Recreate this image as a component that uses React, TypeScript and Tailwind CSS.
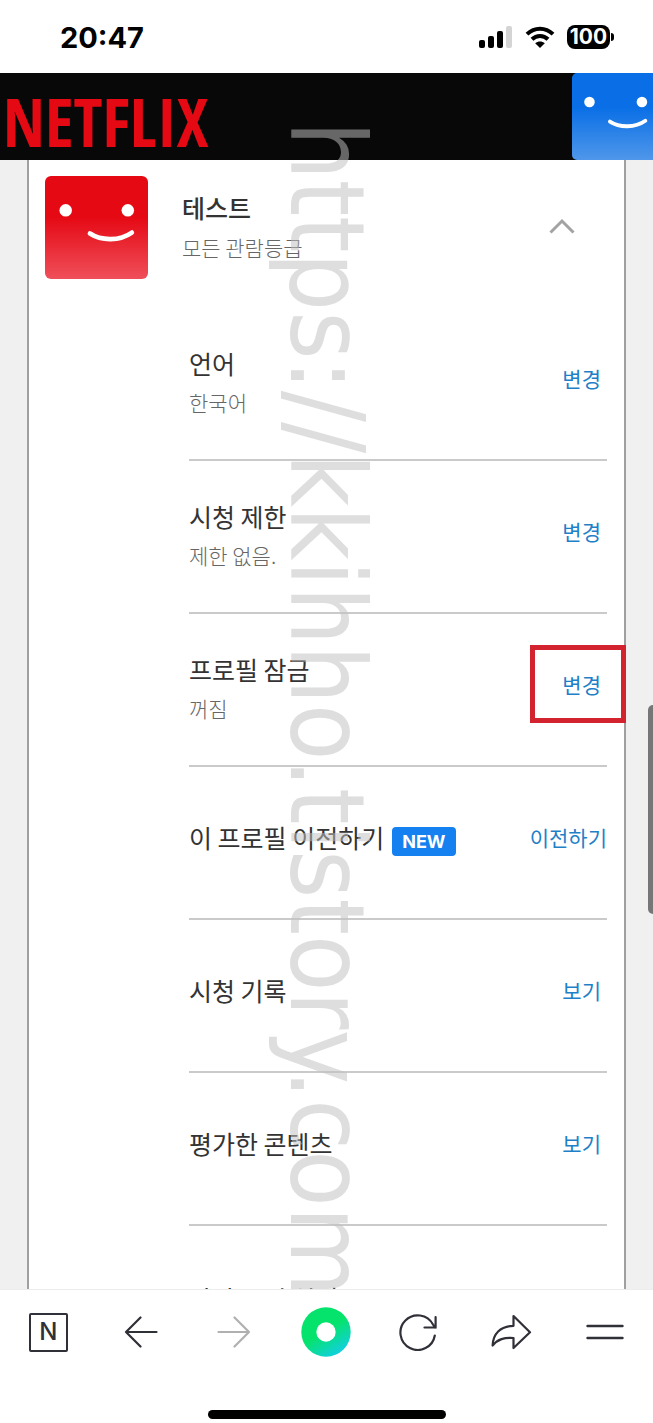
import React from 'react';

interface SettingRow {
  title: string;
  detail?: string;
  action?: string;
  isNew?: boolean;
  marked?: boolean;
}

const ROWS: SettingRow[] = [
  { title: '언어', detail: '한국어', action: '변경' },
  { title: '시청 제한', detail: '제한 없음.', action: '변경' },
  { title: '프로필 잠금', detail: '꺼짐', action: '변경', marked: true },
  { title: '이 프로필 이전하기', action: '이전하기', isNew: true },
  { title: '시청 기록', action: '보기' },
  { title: '평가한 콘텐츠', action: '보기' },
  { title: '자막 표시 설정' },
];

const Avatar: React.FC<{ id: string; top: string; bottom: string; className: string }> = ({ id, top, bottom, className }) => (
  <svg viewBox="0 0 102 102" className={className} aria-hidden="true">
    <defs>
      <linearGradient id={id} x1="0" y1="0" x2="0" y2="1">
        <stop offset="0.4" stopColor={top} />
        <stop offset="1" stopColor={bottom} />
      </linearGradient>
    </defs>
    <rect width="102" height="102" rx="6" fill={`url(#${id})`} />
    <circle cx="20.500" cy="34" r="6.200" fill="#fff" />
    <circle cx="82" cy="34" r="6.200" fill="#fff" />
    <path d="M44.500 57 C56 64.500 74 64.500 86 56" fill="none" stroke="#fff" strokeWidth="4.600" strokeLinecap="round" />
  </svg>
);

const StatusBar = () => (
  <div className="flex h-[73px] shrink-0 items-center justify-between bg-white pr-[39px] pl-[60px]">
    <span className="pt-0.5 font-['Inter'] text-[29px] leading-8 font-bold text-black">20:47</span>
    <div className="flex items-center gap-3">
      {/* Signal */}
      <svg width="34" height="22" viewBox="0 0 34 22" aria-hidden="true">
        <rect x="0" y="14" width="6" height="8" rx="2" />
        <rect x="9" y="10" width="6" height="12" rx="2" />
        <rect x="18" y="5" width="6" height="17" rx="2" />
        <rect x="27" y="0" width="6" height="22" rx="2" fill="#d4d4d4" />
      </svg>
      {/* Wi-Fi */}
      <svg width="30" height="22" viewBox="0 0 30 22" aria-hidden="true" fill="none" stroke="#000" strokeWidth="4">
        <path d="M2 8.200 C9.500 0.800 20.500 0.800 28 8.200" />
        <path d="M7 13.300 C11.500 8.900 18.500 8.900 23 13.300" />
        <path d="M15 22 L10.200 17.200 C13 14.800 17 14.800 19.800 17.200 Z" fill="#000" stroke="none" />
      </svg>
      {/* Battery */}
      <div className="flex items-center gap-px">
        <span className="flex h-6 w-[43px] items-center justify-center rounded-lg bg-black font-['Inter'] text-[21px] leading-6 font-bold text-white">
          100
        </span>
        <span className="h-2 w-[3px] rounded-r-full bg-black" />
      </div>
    </div>
  </div>
);

const SiteHeader = () => (
  <header className="relative flex h-[87px] shrink-0 items-center justify-between bg-[#080808] pl-[3px]">
    <a
      href="#home"
      className="pt-2.5 font-['Noto_Sans_ExtraCondensed','Open_Sans_Condensed','Liberation_Sans_Narrow',sans-serif] text-[67px] leading-none font-bold text-[#e50914]"
    >
      NETFLIX
    </a>
    <button type="button" aria-label="profile" className="h-[87px] w-[81px] overflow-hidden">
      <Avatar id="blueFace" top="#0a6fe6" bottom="#4f97ea" className="size-[87px]" />
    </button>
  </header>
);

const ProfileSummary = () => (
  <div className="flex items-center pr-[49px] pl-4">
    <Avatar id="redFace" top="#e50914" bottom="#ef4f5a" className="size-[103px] shrink-0" />
    <div className="ml-[34px] flex-1 pb-0.5">
      <h2 className="text-[25px] leading-10 font-medium text-[#333]">테스트</h2>
      <p className="text-[21px] leading-10 font-light text-[#666]">모든 관람등급</p>
    </div>
    <button type="button" aria-label="collapse" className="pb-1">
      <svg width="26" height="16" viewBox="0 0 26 16" fill="none" stroke="#a3a3a3" strokeWidth="3">
        <path d="M1.500 14.500 L13 3 L24.500 14.500" />
      </svg>
    </button>
  </div>
);

const Row: React.FC<{ row: SettingRow }> = ({ row }) => (
  <li className="flex h-[153px] shrink-0 items-center justify-between border-b-2 border-[#cacaca] pb-3 last:pb-2">
    <div className={row.detail ? 'pt-2' : ''}>
      <div className="flex items-center gap-2">
        <h3 className="text-[25px] leading-10 font-normal text-[#333]">{row.title}</h3>
        {row.isNew && (
          <span className="mt-2.5 rounded-sm bg-[#1580f0] px-2.5 font-['Inter'] text-[18px] leading-[29px] font-bold text-white">
            NEW
          </span>
        )}
      </div>
      {row.detail && <p className="text-[21px] leading-[38px] font-light text-[#666]">{row.detail}</p>}
    </div>
    {row.marked ? (
      <div className="-mr-[19px] border-[5px] border-[#d2232f] py-[14px] pr-5 pl-[27px]">
        <a href="#change" className="block text-[21px] leading-10 text-[#1f80c8]">{row.action}</a>
      </div>
    ) : (
      row.action && (
        <a href="#change" className={`text-[21px] leading-10 text-[#1f80c8] ${row.isNew ? '' : 'pr-1.5'}`}>{row.action}</a>
      )
    )}
  </li>
);

const BrowserBar = () => (
  <footer className="relative z-20 flex h-[134px] shrink-0 flex-col justify-between border-t border-[#ececec] bg-white pb-1">
    <nav className="grid grid-cols-7 place-items-center px-0.5 pt-[17px] text-[#303038]">
      <button type="button" aria-label="Naver" className="flex size-10 items-center justify-center">
        <span className="flex size-[39px] items-center justify-center rounded-xs border-2 border-[#303038] font-['Inter'] text-[24px] leading-none font-medium">
          N
        </span>
      </button>
      <button type="button" aria-label="back">
        <svg width="34" height="32" viewBox="0 0 34 32" fill="none" stroke="currentColor" strokeWidth="2.200" strokeLinecap="round" strokeLinejoin="round">
          <path d="M32.500 16 H2 M16.500 1.500 L2 16 L16.500 30.500" />
        </svg>
      </button>
      <button type="button" aria-label="forward" className="text-[#b0b0b0]">
        <svg width="34" height="32" viewBox="0 0 34 32" fill="none" stroke="currentColor" strokeWidth="2.200" strokeLinecap="round" strokeLinejoin="round">
          <path d="M1.500 16 H32 M17.500 1.500 L32 16 L17.500 30.500" />
        </svg>
      </button>
      <button type="button" aria-label="green dot">
        <svg width="50" height="50" viewBox="0 0 50 50">
          <defs>
            <linearGradient id="dot" x1="0.300" y1="0.200" x2="0.800" y2="1">
              <stop offset="0.350" stopColor="#06e36c" />
              <stop offset="1" stopColor="#12cdf0" />
            </linearGradient>
          </defs>
          <circle cx="25" cy="25" r="24.700" fill="url(#dot)" />
          <circle cx="25" cy="25" r="9.700" fill="#fff" />
        </svg>
      </button>
      <button type="button" aria-label="reload">
        <svg width="40" height="38" viewBox="0 0 40 38" fill="none" stroke="currentColor" strokeWidth="2.200" strokeLinecap="round">
          <path d="M35.800 22.500 A17.300 17.300 0 1 1 34 11.500 L36 14.500 M36.600 4 V14.500 H25.500" />
        </svg>
      </button>
      <button type="button" aria-label="share">
        <svg width="42" height="36" viewBox="0 0 42 36" fill="none" stroke="currentColor" strokeWidth="2.200" strokeLinejoin="round">
          <path d="M22.500 2 L39 18.200 L22.500 34 V24 C13 23.400 7 25 1.600 31.500 C2 20 9 12 22.500 11.800 Z" />
        </svg>
      </button>
      <button type="button" aria-label="menu">
        <svg width="38" height="38" viewBox="0 0 38 38" stroke="currentColor" strokeWidth="2.400" strokeLinecap="round">
          <path d="M1.500 13 H36.500 M1.500 25 H36.500" />
        </svg>
      </button>
    </nav>
    <div className="mx-auto h-[9px] w-[238px] rounded-full bg-black" />
  </footer>
);

export default function App() {
  return (
    <div className="relative flex h-screen flex-col overflow-hidden bg-white font-['Noto_Sans_CJK_KR',sans-serif]">
      <StatusBar />
      <SiteHeader />
      <main className="relative min-h-0 flex-1 overflow-hidden bg-[#f0f0f0] px-[27px]">
        <section className="border-x-2 border-[#a0a0a0] bg-white pt-4">
          <ProfileSummary />
          <ul className="mt-[29px] pr-[17px] pl-[160px]">
            {ROWS.map((row) => (
              <Row key={row.title} row={row} />
            ))}
          </ul>
        </section>
        {/* Scroll thumb */}
        <div className="absolute top-[545px] right-0 h-[209px] w-[5px] rounded-l-full bg-[#767676]" />
      </main>
      <BrowserBar />
      {/* Watermark */}
      <div className="pointer-events-none absolute top-[121px] left-[267px] z-10 font-['DejaVu_Sans_Condensed','DejaVu_Sans',sans-serif] text-[103px] leading-[120px] whitespace-nowrap text-[#bfbfbf]/52 [writing-mode:vertical-rl]">
        https://kkihho.tistory.com
      </div>
    </div>
  );
}
